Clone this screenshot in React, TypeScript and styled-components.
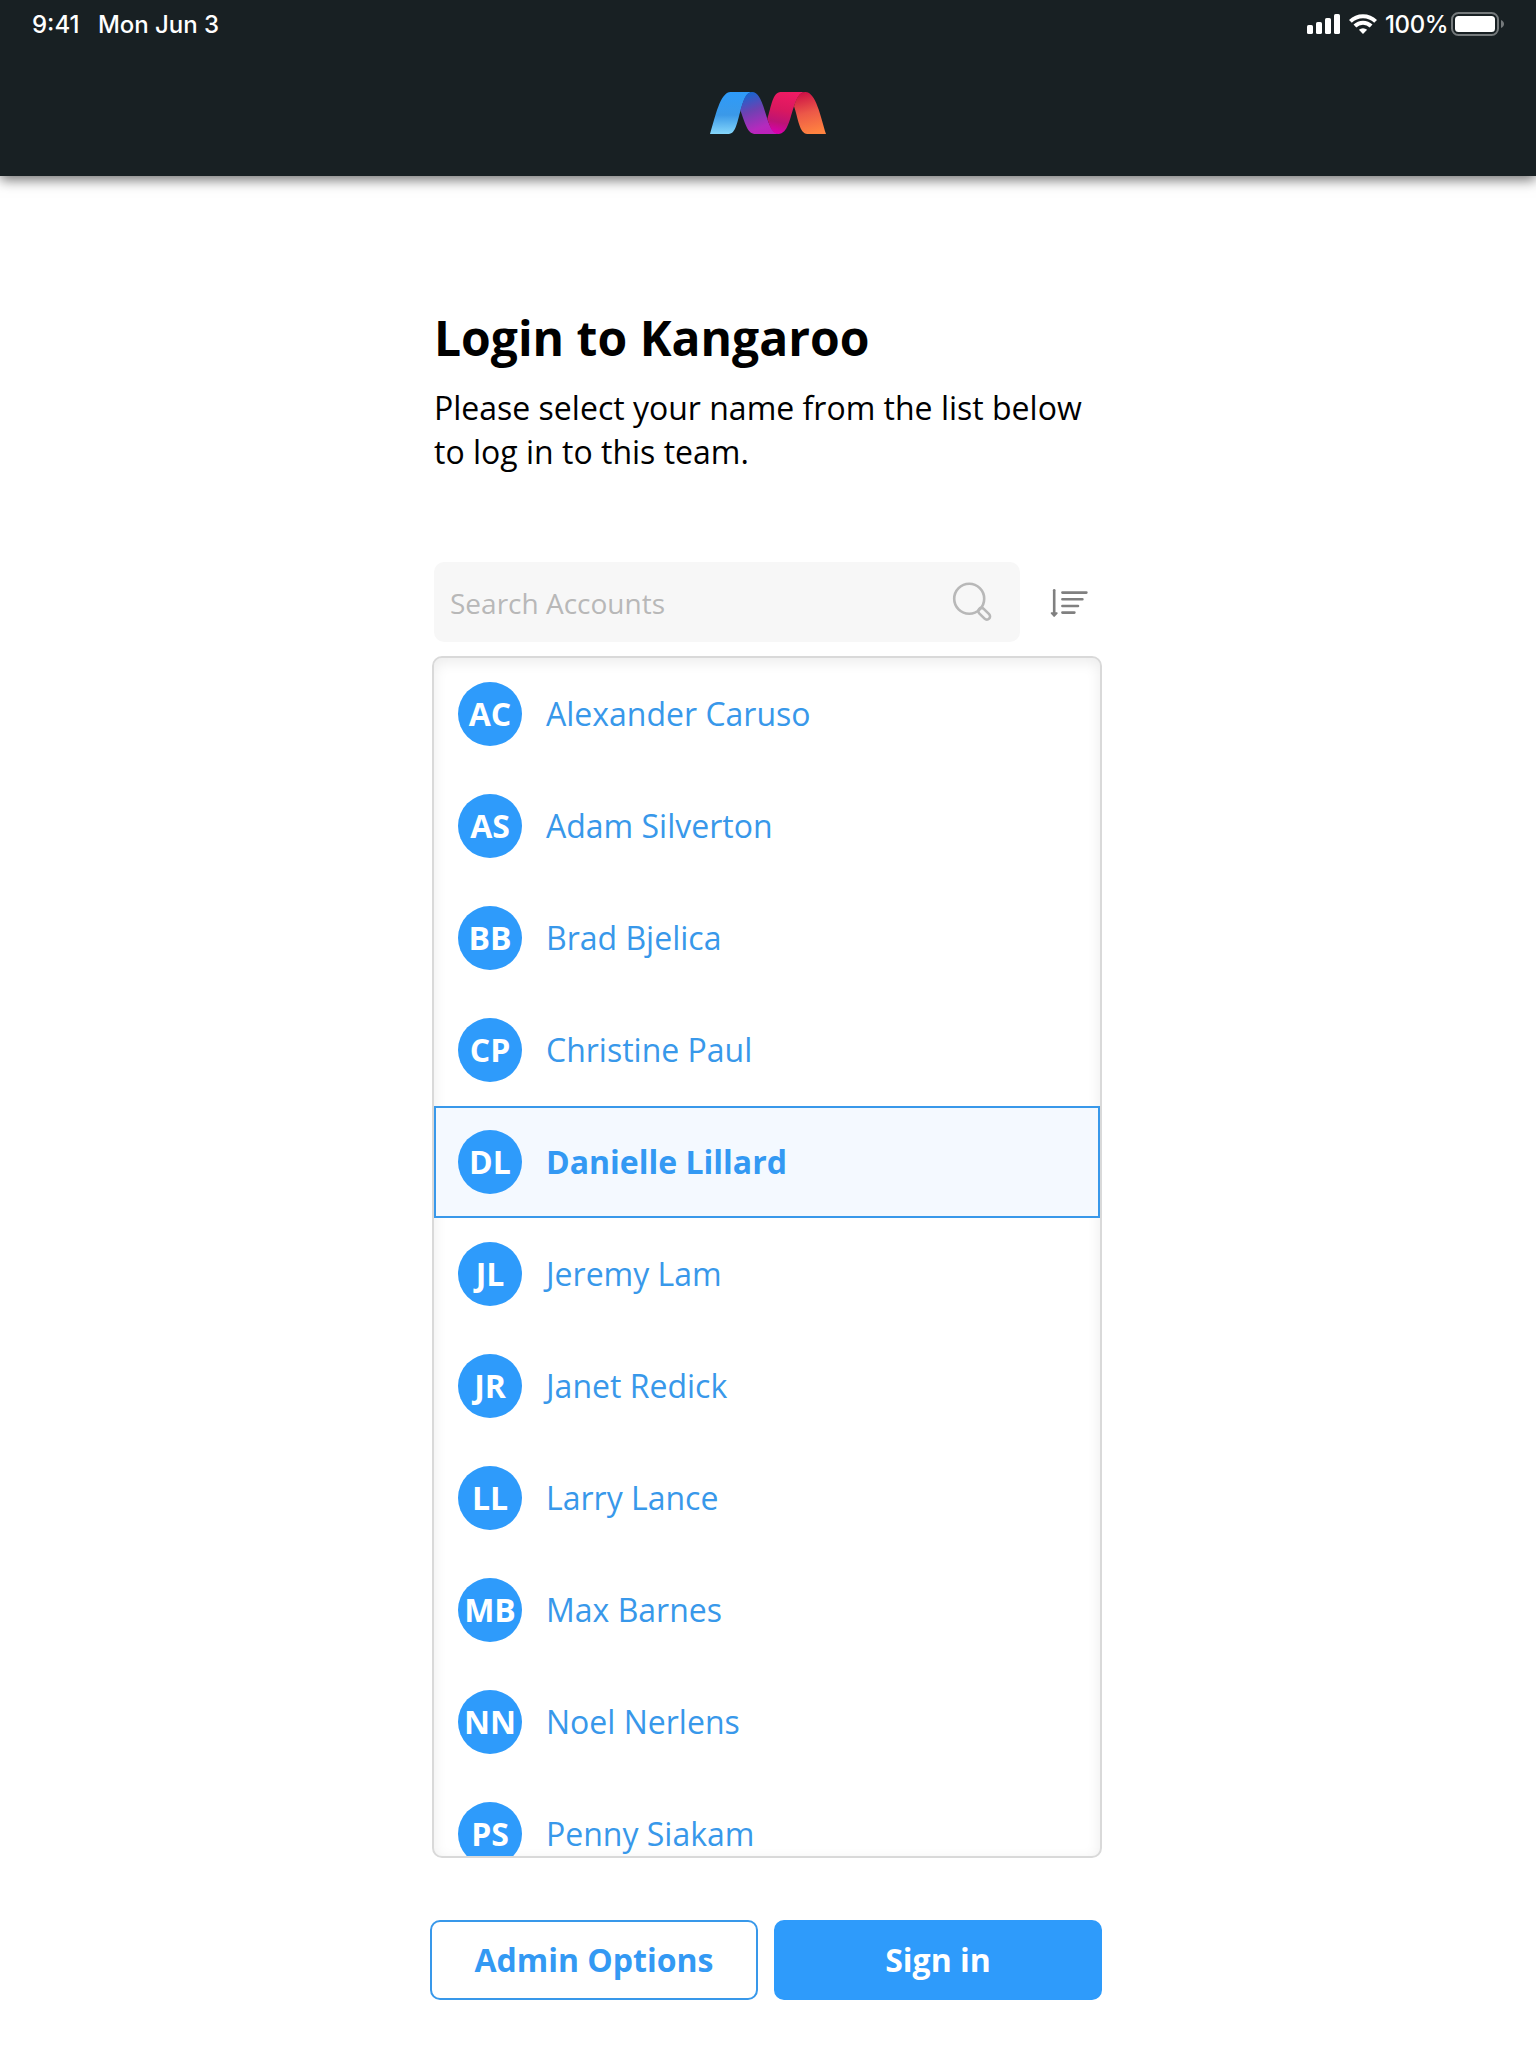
import React from 'react';
import styled, { createGlobalStyle } from 'styled-components';

const BLUE = '#2e9bfb';
const TEXT_BLUE = '#3898ea';

const GlobalStyle = createGlobalStyle`
  * { box-sizing: border-box; }
  body { margin: 0; background: #fff; font-family: 'Open Sans', sans-serif; }
`;

const Page = styled.div`
  width: 1536px;
  height: 2048px;
  overflow: hidden;
  background: #fff;
  display: flex;
  flex-direction: column;
`;

const Header = styled.header`
  flex: none;
  height: 176px;
  background: #182023;
  box-shadow: 0 4px 12px rgba(0, 0, 0, 0.55);
`;

const StatusBar = styled.div`
  height: 48px;
  padding: 0 31px 0 32px;
  display: flex;
  align-items: center;
  justify-content: space-between;
  color: #fff;
  font-family: Inter, sans-serif;
  font-size: 24px;
  font-weight: 450;
  line-height: 44px;
`;

const StatusGroup = styled.div<{ $gap: number }>`
  display: flex;
  align-items: center;
  gap: ${(p) => p.$gap}px;
`;

const StatusText = styled.span<{ $spacing?: number; $width?: number }>`
  padding-top: 2px;
  letter-spacing: ${(p) => p.$spacing ?? 0}px;
  width: ${(p) => (p.$width ? `${p.$width}px` : 'auto')};
  white-space: nowrap;
`;

const LogoRow = styled.div`
  display: flex;
  justify-content: center;
  padding-top: 44px;
  svg { display: block; }
`;

const Main = styled.main`
  width: 672px;
  margin: 130px auto 0 430px;
  display: flex;
  flex-direction: column;
`;

const Title = styled.h1`
  margin: 0 0 16px 4px;
  font-size: 48px;
  line-height: 64px;
  font-weight: 700;
  color: #000;
`;

const Intro = styled.p`
  margin: 0 0 88px 4px;
  font-size: 32px;
  line-height: 44px;
  color: #000;
`;

const SearchRow = styled.div`
  display: flex;
  align-items: center;
  margin: 0 0 14px 4px;
`;

const SearchBox = styled.label`
  width: 586px;
  height: 80px;
  border-radius: 10px;
  background: #f7f7f7;
  padding: 0 28px 0 16px;
  display: flex;
  align-items: center;
  justify-content: space-between;
`;

const SearchInput = styled.input`
  border: 0;
  outline: 0;
  padding: 2px 0 0;
  width: 440px;
  background: transparent;
  font: 400 28px/40px 'Open Sans', sans-serif;
  &::placeholder { color: #b8b8b8; opacity: 1; }
`;

const SortButton = styled.button`
  border: 0;
  padding: 0;
  margin-left: 28px;
  width: 44px;
  height: 44px;
  background: transparent;
  svg { display: block; }
`;

const Panel = styled.div`
  margin-left: 2px;
  width: 670px;
  height: 1202px;
  border: 2px solid #d9d9d9;
  border-radius: 10px;
  box-shadow: inset 0 4px 14px rgba(0, 0, 0, 0.08);
  overflow: hidden;
`;

const Row = styled.div<{ $selected: boolean }>`
  height: 112px;
  padding-left: ${(p) => (p.$selected ? 22 : 24)}px;
  display: flex;
  align-items: center;
  gap: 24px;
  color: ${(p) => (p.$selected ? '#3399f3' : TEXT_BLUE)};
  font-size: 32px;
  font-weight: ${(p) => (p.$selected ? 700 : 400)};
  background: ${(p) => (p.$selected ? '#f4f9ff' : 'transparent')};
  border: ${(p) => (p.$selected ? `2px solid ${TEXT_BLUE}` : '0')};
`;

const Avatar = styled.span`
  flex: none;
  width: 64px;
  height: 64px;
  border-radius: 50%;
  background: ${BLUE};
  color: #fff;
  font-size: 32px;
  font-weight: 700;
  line-height: 64px;
  display: flex;
  justify-content: center;
`;

const Name = styled.span`
  line-height: 44px;
  white-space: nowrap;
`;

const Actions = styled.div`
  display: flex;
  gap: 16px;
  margin-top: 62px;
`;

const Button = styled.button<{ $primary?: boolean }>`
  width: 328px;
  height: 80px;
  padding: 0;
  border-radius: 10px;
  border: 2px solid ${(p) => (p.$primary ? BLUE : TEXT_BLUE)};
  background: ${(p) => (p.$primary ? BLUE : '#fff')};
  color: ${(p) => (p.$primary ? '#fff' : '#3399f3')};
  font: 700 32px/44px 'Open Sans', sans-serif;
`;

const SignalIcon = () => (
  <svg width="34" height="20" viewBox="0 0 34 20" fill="#fff">
    <rect x="0" y="11" width="6" height="9" rx="1.6" />
    <rect x="9" y="8" width="6" height="12" rx="1.6" />
    <rect x="18" y="4" width="6" height="16" rx="1.6" />
    <rect x="27" y="0" width="6" height="20" rx="1.6" />
  </svg>
);

const WifiIcon = () => (
  <svg width="28" height="20" viewBox="0 0 28 20" fill="none" stroke="#fff" strokeWidth="4">
    <path d="M1.4 7.4a18.2 18.2 0 0 1 25.2 0" />
    <path d="M5.9 12a11.7 11.7 0 0 1 16.2 0" />
    <path d="M14 20l-4.1-4.2a6 6 0 0 1 8.2 0z" fill="#fff" stroke="none" />
  </svg>
);

const BatteryIcon = () => (
  <svg width="54" height="24" viewBox="0 0 54 24">
    <rect x="1" y="1" width="46" height="22" rx="6.5" fill="none" stroke="#74797b" strokeWidth="2" />
    <rect x="4" y="4" width="40" height="16" rx="3.5" fill="#fff" />
    <path d="M50 8c4 1.6 4 6.4 0 8z" fill="#74797b" />
  </svg>
);

const Logo = () => (
  <svg width="116" height="42" viewBox="60 51 348 126">
    <defs>
      <linearGradient id="sky" x1="0" y1="0" x2="0" y2="1">
        <stop offset="0" stopColor="#2d9bfa" />
        <stop offset=".55" stopColor="#3b99e8" />
        <stop offset="1" stopColor="#85d6fa" />
      </linearGradient>
      <linearGradient id="violet" x1=".2" y1="0" x2=".55" y2="1">
        <stop offset="0" stopColor="#1268d2" />
        <stop offset=".42" stopColor="#6c42b2" />
        <stop offset=".85" stopColor="#b52abd" />
        <stop offset="1" stopColor="#bd22bb" />
      </linearGradient>
      <linearGradient id="pink" x1=".6" y1="0" x2=".4" y2="1">
        <stop offset="0" stopColor="#f01b63" />
        <stop offset=".45" stopColor="#d9185f" />
        <stop offset=".75" stopColor="#bd1375" />
        <stop offset="1" stopColor="#d800ae" />
      </linearGradient>
      <linearGradient id="orange" x1=".3" y1="0" x2=".5" y2="1">
        <stop offset="0" stopColor="#cc1046" />
        <stop offset=".5" stopColor="#ec5848" />
        <stop offset="1" stopColor="#ff8340" />
      </linearGradient>
    </defs>
    <path fill="url(#sky)" d="M60 177C76 126 90 51 122 51H188C166 51 160 82 152 106C142 138 138 177 116 177Z" />
    <path fill="url(#violet)" d="M186 51C210 51 220 94 232 132C240 155 248 177 270 177H194C172 177 164 140 151 106C160 78 166 51 186 51Z" />
    <path fill="url(#pink)" d="M272 51H348C326 51 320 74 312 94C300 128 294 177 265 177C246 177 240 155 232 132C244 94 248 51 272 51Z" />
    <path fill="url(#orange)" d="M346 51C378 51 392 126 408 177H352C328 177 324 128 312 94C319 72 326 51 346 51Z" />
  </svg>
);

const SearchIcon = () => (
  <svg width="40" height="40" viewBox="0 0 40 40" fill="none" stroke="#b8b8b8" strokeWidth="2.6">
    <circle cx="17.2" cy="16.8" r="15" />
    <rect x="-3.2" y="0" width="6.4" height="14" rx="3.2" transform="translate(27.2 26.8) rotate(-45)" />
  </svg>
);

const SortIcon = () => (
  <svg width="44" height="44" viewBox="0 0 44 44" fill="none" stroke="#808080" strokeWidth="2.6" strokeLinecap="round">
    <path d="M6.2 10.2V33" />
    <path d="M3.6 33.2H8.8L6.2 36z" fill="#808080" strokeWidth="1.8" strokeLinejoin="round" />
    <path d="M14.4 12.6H38.4M14.4 19.2H34.4M14.4 26H30M14.4 32.6H26.4" />
  </svg>
);

const accounts = [
  ['AC', 'Alexander Caruso'],
  ['AS', 'Adam Silverton'],
  ['BB', 'Brad Bjelica'],
  ['CP', 'Christine Paul'],
  ['DL', 'Danielle Lillard'],
  ['JL', 'Jeremy Lam'],
  ['JR', 'Janet Redick'],
  ['LL', 'Larry Lance'],
  ['MB', 'Max Barnes'],
  ['NN', 'Noel Nerlens'],
  ['PS', 'Penny Siakam'],
];

export default function App() {
  return (
    <Page>
      <GlobalStyle />
      <Header>
        <StatusBar>
          <StatusGroup $gap={18}>
            <StatusText $width={48}>9:41</StatusText>
            <StatusText $spacing={-0.05}>Mon Jun 3</StatusText>
          </StatusGroup>
          <StatusGroup $gap={8}>
            <SignalIcon />
            <WifiIcon />
            <StatusText $width={58} $spacing={-0.4}>100%</StatusText>
            <BatteryIcon />
          </StatusGroup>
        </StatusBar>
        <LogoRow>
          <Logo />
        </LogoRow>
      </Header>
      <Main>
        <Title>Login to Kangaroo</Title>
        <Intro>
          Please select your name from the list below
          <br />
          to log in to this team.
        </Intro>
        <SearchRow>
          <SearchBox>
            <SearchInput placeholder="Search Accounts" />
            <SearchIcon />
          </SearchBox>
          <SortButton aria-label="Sort">
            <SortIcon />
          </SortButton>
        </SearchRow>
        <Panel>
          {accounts.map(([initials, name]) => (
            <Row key={initials} $selected={initials === 'DL'}>
              <Avatar>{initials}</Avatar>
              <Name>{name}</Name>
            </Row>
          ))}
        </Panel>
        <Actions>
          <Button>Admin Options</Button>
          <Button $primary>Sign in</Button>
        </Actions>
      </Main>
    </Page>
  );
}
